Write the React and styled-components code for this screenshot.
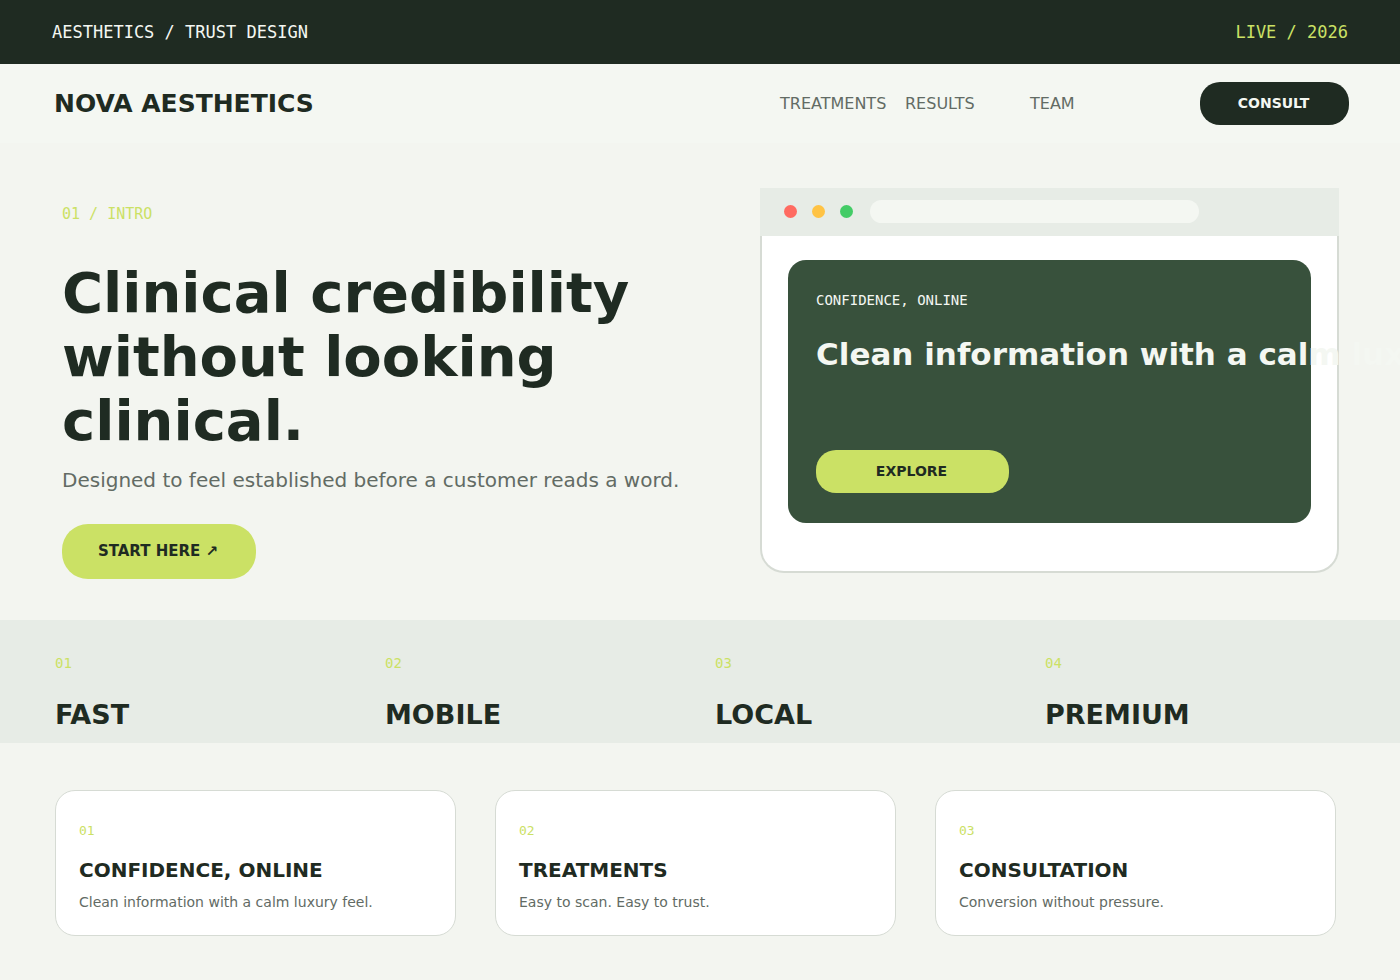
import styled, { createGlobalStyle } from "styled-components";

const App = () => {
  return (
    <>
      <GlobalStyle />
      <TopBar>
        <span>AESTHETICS / TRUST DESIGN</span>
        <Live>LIVE / 2026</Live>
      </TopBar>
      <Header>
        <Logo href="#">NOVA AESTHETICS</Logo>
        <Nav>
          {NAV.map(name => (
            <NavLink key={name} href={`#${name.toLowerCase()}`}>
              {name}
            </NavLink>
          ))}
        </Nav>
        <ConsultButton>CONSULT</ConsultButton>
      </Header>
      <main>
        <Hero>
          <Intro>
            <Eyebrow>01 / INTRO</Eyebrow>
            <Title>
              Clinical credibility
              <br />
              without looking
              <br />
              clinical.
            </Title>
            <Lead>Designed to feel established before a customer reads a word.</Lead>
            <StartButton>START HERE ↗</StartButton>
          </Intro>
          <Browser>
            <BrowserBar>
              <Dots>
                {DOTS.map(color => (
                  <Dot key={color} $color={color} />
                ))}
              </Dots>
              <Address />
            </BrowserBar>
            <Screen>
              <Panel>
                <PanelLabel>CONFIDENCE, ONLINE</PanelLabel>
                <PanelTitle>Clean information with a calm luxury feel.</PanelTitle>
                <ExploreButton>EXPLORE</ExploreButton>
              </Panel>
            </Screen>
          </Browser>
        </Hero>
        <Stats>
          {STATS.map((name, idx) => (
            <div key={name}>
              <StatNumber>0{idx + 1}</StatNumber>
              <StatName>{name}</StatName>
            </div>
          ))}
        </Stats>
        <Cards>
          {CARDS.map((card, idx) => (
            <Card key={card.title}>
              <CardNumber>0{idx + 1}</CardNumber>
              <CardTitle>{card.title}</CardTitle>
              <CardText>{card.text}</CardText>
            </Card>
          ))}
        </Cards>
      </main>
    </>
  );
};

export default App;

const NAV = ["TREATMENTS", "RESULTS", "TEAM"];

const DOTS = ["#ff6b61", "#ffc344", "#43cc66"];

const STATS = ["FAST", "MOBILE", "LOCAL", "PREMIUM"];

const CARDS = [
  {
    title: "CONFIDENCE, ONLINE",
    text: "Clean information with a calm luxury feel.",
  },
  { title: "TREATMENTS", text: "Easy to scan. Easy to trust." },
  { title: "CONSULTATION", text: "Conversion without pressure." },
];

const DARK = "#1f2b22";
const LIME = "#cbe165";
const PAPER = "#f4f7f2";
const MIST = "#e7ece6";
const GRAY = "#626b64";
const LINE = "#d6dbd4";
const MONO = `"DejaVu Sans Mono", monospace`;

const GlobalStyle = createGlobalStyle`
  * {
    box-sizing: border-box;
  }
  body {
    margin: 0;
    background-color: #f3f5f0;
    color: ${DARK};
    font-family: "DejaVu Sans", sans-serif;
  }
  h1, h2, h3, p {
    margin: 0;
  }
`;

const TopBar = styled.div`
  display: flex;
  justify-content: space-between;
  align-items: center;
  height: 64px;
  padding: 0 52px;
  background-color: ${DARK};
  color: ${PAPER};
  font-family: ${MONO};
  font-size: 17px;
`;

const Live = styled.span`
  color: ${LIME};
`;

const Header = styled.header`
  display: flex;
  align-items: center;
  height: 79px;
  padding: 0 51px 0 54px;
  background-color: ${PAPER};
`;

const Logo = styled.a`
  margin-right: auto;
  color: ${DARK};
  font-size: 25px;
  font-weight: 700;
  text-decoration: none;
`;

const Nav = styled.nav`
  display: grid;
  grid-template-columns: 125px 125px 170px;
`;

const NavLink = styled.a`
  color: ${GRAY};
  font-size: 16px;
  text-decoration: none;
`;

const Button = styled.button`
  height: 43px;
  padding: 0 2px 2px 0;
  border: none;
  border-radius: 20px;
  background-color: ${LIME};
  color: ${DARK};
  font-family: inherit;
  font-size: 14px;
  font-weight: 700;
  cursor: pointer;
`;

const ConsultButton = styled(Button)`
  width: 149px;
  background-color: ${DARK};
  color: ${PAPER};
`;

const StartButton = styled(Button)`
  width: 194px;
  height: 55px;
  border-radius: 26px;
  font-size: 15px;
`;

const ExploreButton = styled(Button)`
  width: 193px;
`;

const Hero = styled.section`
  display: grid;
  grid-template-columns: 1fr 579px;
  gap: 60px;
  overflow: hidden;
  padding: 45px 61px 41px 62px;
`;

const Intro = styled.div`
  padding-top: 16px;
`;

const Eyebrow = styled.p`
  color: ${LIME};
  font-family: ${MONO};
  font-size: 15px;
  line-height: 20px;
`;

const Title = styled.h1`
  margin: 37px 0 11px;
  font-size: 56px;
  line-height: 64px;
`;

const Lead = styled.p`
  margin-bottom: 28px;
  color: ${GRAY};
  font-size: 20px;
  line-height: 32px;
`;

const Browser = styled.div`
  display: flex;
  flex-direction: column;
  height: 385px;
`;

const BrowserBar = styled.div`
  display: flex;
  align-items: center;
  gap: 17px;
  height: 48px;
  padding: 0 24px 2px;
  background-color: ${MIST};
`;

const Dots = styled.div`
  display: flex;
  gap: 15px;
`;

const Dot = styled.span`
  width: 13px;
  height: 13px;
  border-radius: 50%;
  background-color: ${({ $color }) => $color};
`;

const Address = styled.div`
  width: 329px;
  height: 23px;
  border-radius: 12px;
  background-color: ${PAPER};
`;

const Screen = styled.div`
  flex: 1;
  padding: 24px 26px 48px;
  border: 2px solid ${LINE};
  border-top: none;
  border-radius: 0 0 24px 24px;
  background-color: white;
`;

const Panel = styled.div`
  height: 263px;
  padding: 30px 28px;
  border-radius: 18px;
  background-color: #38513c;
  color: ${PAPER};
`;

const PanelLabel = styled.p`
  font-family: ${MONO};
  font-size: 14px;
  line-height: 20px;
`;

const PanelTitle = styled.h2`
  margin: 24px 0 76px;
  font-size: 31px;
  line-height: 40px;
  white-space: nowrap;
`;

const Stats = styled.section`
  display: grid;
  grid-template-columns: repeat(4, 1fr);
  padding: 33px 25px 11px 55px;
  background-color: ${MIST};
`;

const StatNumber = styled.p`
  color: ${LIME};
  font-family: ${MONO};
  font-size: 14px;
  line-height: 20px;
`;

const StatName = styled.h2`
  margin-top: 25px;
  font-size: 27px;
  line-height: 34px;
`;

const Cards = styled.section`
  display: grid;
  grid-template-columns: repeat(3, 1fr);
  gap: 39px;
  padding: 47px 64px 44px 55px;
`;

const Card = styled.article`
  padding: 30px 23px 23px;
  border: 1px solid ${LINE};
  border-radius: 20px;
  background-color: white;
`;

const CardNumber = styled.p`
  color: ${LIME};
  font-family: ${MONO};
  font-size: 13px;
  line-height: 20px;
`;

const CardTitle = styled.h3`
  margin: 14px 0 7px;
  font-size: 20px;
  line-height: 30px;
`;

const CardText = styled.p`
  color: ${GRAY};
  font-size: 14px;
  line-height: 20px;
`;
